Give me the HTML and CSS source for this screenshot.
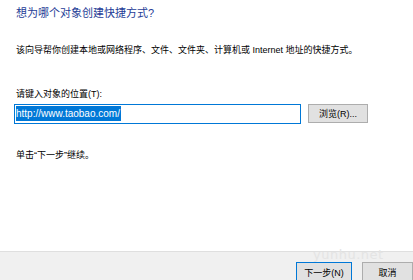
FILE: index.html
```html
<!doctype html>
<html lang="zh-CN">
<head>
<meta charset="utf-8">
<title>创建快捷方式</title>
<link rel="stylesheet" href="styles.css">
</head>
<body>

	<div class="wizard">

		<div class="content">

			<h1 class="title">想为哪个对象创建快捷方式?</h1>

			<p class="desc">该向导帮你创建本地或网络程序、文件、文件夹、计算机或 Internet 地址的快捷方式。</p>

			<div class="field-label">请键入对象的位置(T):</div>

			<div class="row">
				<div class="input"><span class="sel">http://www.taobao.com/</span></div>
				<button class="btn browse">浏览(R)...</button>
			</div>

			<p class="hint">单击“下一步”继续。</p>

		</div>

		<div class="footer">
			<button class="btn next">下一步(N)</button>
			<button class="btn cancel">取消</button>
		</div>

		<div class="watermark">yunhu.net</div>

	</div>

</body>
</html>
```

FILE: styles.css
```css
body, html { margin: 0; height: 100%; overflow: hidden; background: #fff; }
body { font: 9px "Liberation Sans", "Noto Sans CJK SC", sans-serif; color: #000; }

.wizard { display: flex; flex-direction: column; height: 280px; position: relative; }

.content { flex: 1; padding-left: 16px; }

.title { font-size: 11px; font-weight: normal; line-height: 16px; margin: 5px 0 0; color: #1e3c96; }

.desc { line-height: 12px; margin: 23px 0 0; }

.field-label { line-height: 12px; margin-top: 32px; }

.row { display: flex; margin-top: 4px; }

.input { box-sizing: border-box; width: 287px; height: 20px; margin-left: -2px; border: 1px solid #0078d7; padding: 1px 0 0 1px; }
.sel { display: inline-block; background: #0078d7; color: #fff; font-size: 10px; line-height: 15px; padding-right: 1px; }

.btn { box-sizing: border-box; height: 19px; background: #e1e1e1; border: 1px solid #adadad; font: 9px "Liberation Sans", "Noto Sans CJK SC", sans-serif; color: #000; padding: 0; }
.browse { width: 60px; margin-left: 7px; }

.hint { line-height: 12px; margin: 25px 0 0; }

.footer { height: 18px; border-top: 1px solid #dfdfdf; background: #f0f0f0; display: flex; padding: 10px 0 0 296px; gap: 10px; }
.footer .btn { height: 20px; }
.next { width: 56px; border-color: #0078d7; }
.cancel { width: 51px; }

.watermark { position: absolute; left: 313px; top: 247px; font: 13px "DejaVu Sans", sans-serif; color: #e4e4e4; letter-spacing: 0.5px; }
```
